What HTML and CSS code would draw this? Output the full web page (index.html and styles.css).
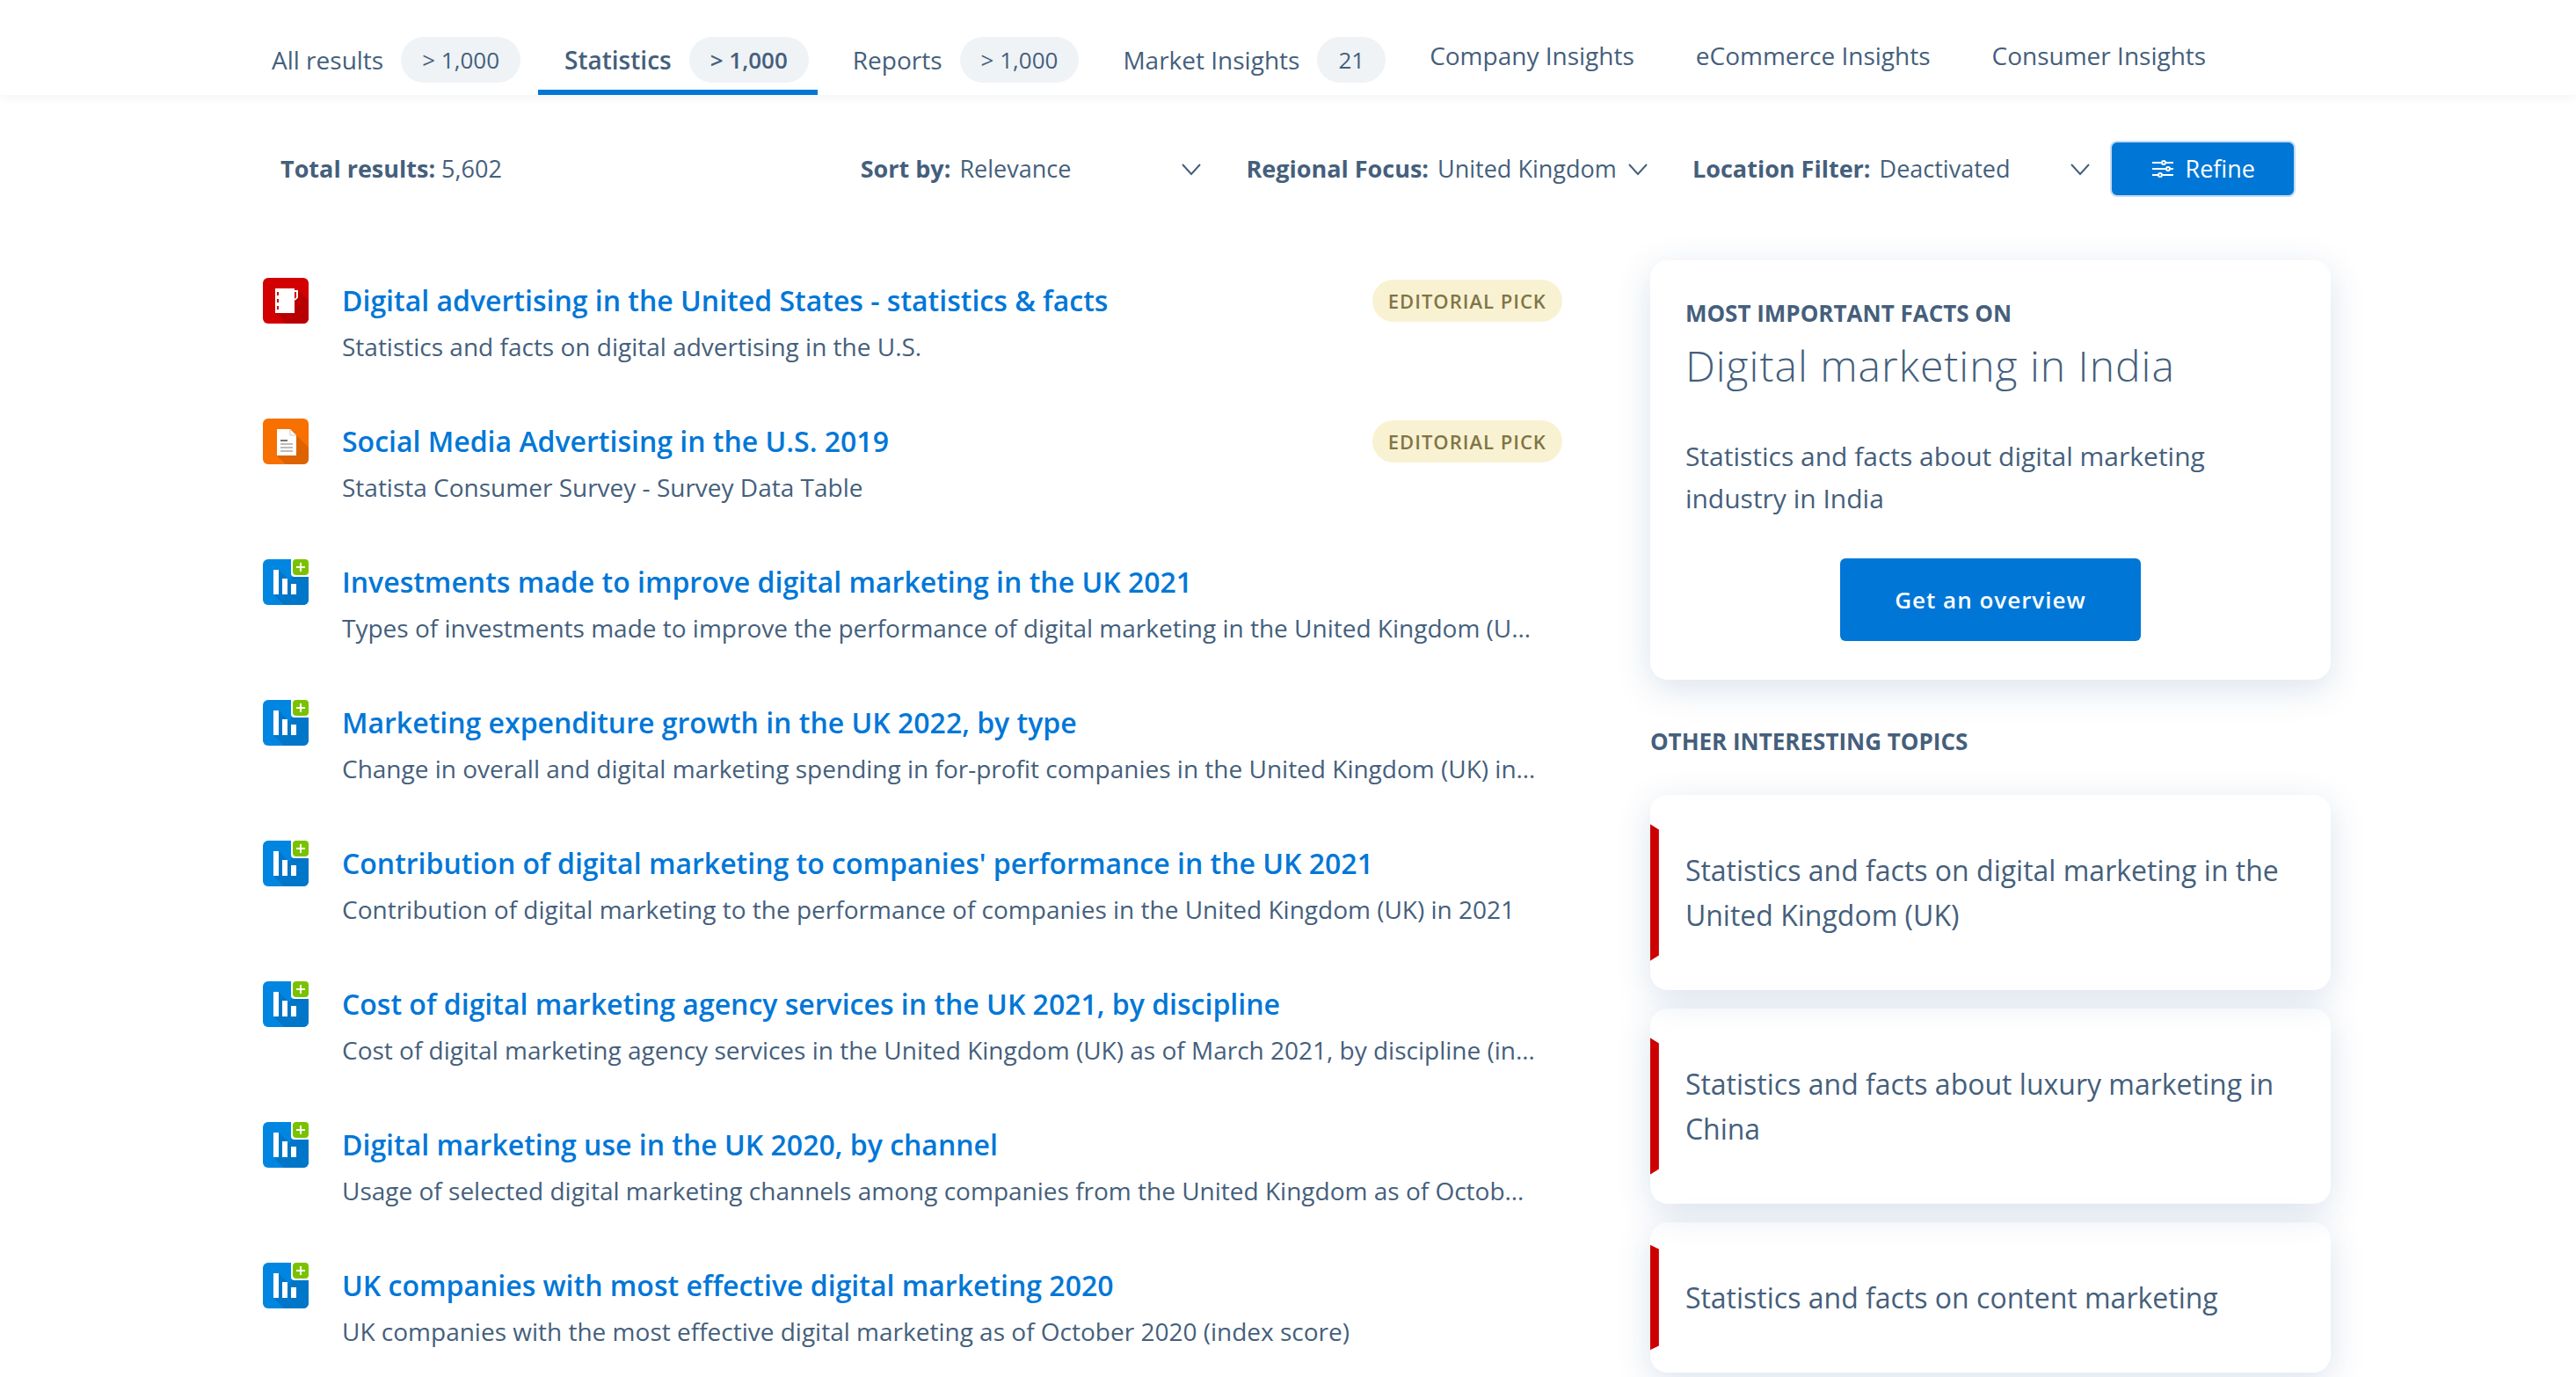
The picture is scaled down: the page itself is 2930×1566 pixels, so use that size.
FILE: index.html
```
<!DOCTYPE html>
<html lang="en">
<head>
    <meta charset="UTF-8">
    <meta name="viewport" content="width=device-width, initial-scale=1.0">
    <title>Search results</title>
    <link rel="stylesheet" href="styles.css">
</head>
<body>
    <!-- Icons shared by the result rows -->
    <svg class="sprite" aria-hidden="true">
        <symbol id="icon-topic" viewBox="0 0 52 52">
            <rect width="52" height="52" rx="6" fill="#d20000"/>
            <path d="M40 14l12 12v20a6 6 0 0 1-6 6H26L14 40z" fill="#b80000"/>
            <path d="M14 12h22v28H14z" fill="#fff"/>
            <path d="M16 16h2v4h-2zM16 24h2v4h-2zM16 32h2v4h-2z" fill="#d20000"/>
            <path d="M35 15h4v7l-3 3" fill="none" stroke="#fff" stroke-width="2"/>
            <path d="M36 16h2v6l-2 2z" fill="#d20000"/>
        </symbol>
        <symbol id="icon-survey" viewBox="0 0 52 52">
            <rect width="52" height="52" rx="6" fill="#f77000"/>
            <path d="M38 19l14 14v13a6 6 0 0 1-6 6H26L16 42z" fill="#dc6300"/>
            <path d="M16 12h15l7 7v23H16z" fill="#fff"/>
            <path d="M31 12v7h7" fill="none" stroke="#c8c8c8" stroke-width="1"/>
            <path d="M20 24h8v2h-8z" fill="#757575"/>
            <path d="M20 28h14v2H20zM20 32h14v2H20zM20 36h14v2H20z" fill="#bdbdbd"/>
        </symbol>
        <symbol id="icon-stat" viewBox="0 0 52 52">
            <rect width="52" height="52" rx="6" fill="#0086e0"/>
            <path d="M18 12l34 34a6 6 0 0 1-6 6H24L12 40z" fill="#0076c8"/>
            <path d="M34 18h18v28L30 24z" fill="#0076c8"/>
            <path d="M12 12h6v28h-6zM22 22h6v18h-6zM32 28h6v12h-6z" fill="#fff"/>
            <path d="M32 0h20v20H36a4 4 0 0 1-4-4z" fill="#fff"/>
            <rect x="34" width="18" height="18" rx="4" fill="#7ac200"/>
            <path d="M42 4h2v4h4v2h-4v4h-2v-4h-4V8h4z" fill="#fff"/>
        </symbol>
        <symbol id="icon-chevron" viewBox="0 0 24 14">
            <path d="M2 1l10 11L22 1" fill="none" stroke="currentColor" stroke-width="2"/>
        </symbol>
    </svg>

    <header class="tabs-bar">
        <nav class="tabs">
            <a class="tab has-count" href="#">All results <span class="count">&gt; 1,000</span></a>
            <a class="tab has-count active" href="#">Statistics <span class="count">&gt; 1,000</span></a>
            <a class="tab has-count" href="#">Reports <span class="count">&gt; 1,000</span></a>
            <a class="tab has-count" href="#">Market Insights <span class="count">21</span></a>
            <a class="tab" href="#">Company Insights</a>
            <a class="tab" href="#">eCommerce Insights</a>
            <a class="tab" href="#">Consumer Insights</a>
        </nav>
    </header>

    <div class="filters">
        <p class="total"><strong>Total results:</strong> 5,602</p>
        <div class="filter">
            <label for="sort">Sort by:</label>
            <div class="select select-wide">
                <select id="sort">
                    <option>Relevance</option>
                    <option>Date of publication</option>
                </select>
                <svg><use href="#icon-chevron"/></svg>
            </div>
        </div>
        <div class="filter">
            <label for="region">Regional Focus:</label>
            <div class="select">
                <select id="region">
                    <option>United Kingdom</option>
                    <option>Worldwide</option>
                </select>
                <svg><use href="#icon-chevron"/></svg>
            </div>
        </div>
        <div class="filter">
            <label for="location">Location Filter:</label>
            <div class="select">
                <select id="location">
                    <option>Deactivated</option>
                    <option>Activated</option>
                </select>
                <svg><use href="#icon-chevron"/></svg>
            </div>
        </div>
        <button class="refine" type="button">
            <svg viewBox="0 0 24 20" fill="none" stroke="currentColor" stroke-width="2">
                <path d="M0 3h10M16 3h8M0 10h15M21 10h3M0 17h6M12 17h12"/>
                <circle cx="13" cy="3" r="2"/>
                <circle cx="18" cy="10" r="2"/>
                <circle cx="9" cy="17" r="2"/>
            </svg>
            Refine
        </button>
    </div>

    <div class="content">
        <main class="results">
            <article class="result">
                <svg class="icon"><use href="#icon-topic"/></svg>
                <div class="text">
                    <h2><a href="#">Digital advertising in the United States - statistics &amp; facts</a></h2>
                    <p>Statistics and facts on digital advertising in the U.S.</p>
                </div>
                <span class="pick">Editorial Pick</span>
            </article>
            <article class="result">
                <svg class="icon"><use href="#icon-survey"/></svg>
                <div class="text">
                    <h2><a href="#">Social Media Advertising in the U.S. 2019</a></h2>
                    <p>Statista Consumer Survey - Survey Data Table</p>
                </div>
                <span class="pick">Editorial Pick</span>
            </article>
            <article class="result">
                <svg class="icon"><use href="#icon-stat"/></svg>
                <div class="text">
                    <h2><a href="#">Investments made to improve digital marketing in the UK 2021</a></h2>
                    <p>Types of investments made to improve the performance of digital marketing in the United Kingdom (U…</p>
                </div>
            </article>
            <article class="result">
                <svg class="icon"><use href="#icon-stat"/></svg>
                <div class="text">
                    <h2><a href="#">Marketing expenditure growth in the UK 2022, by type</a></h2>
                    <p>Change in overall and digital marketing spending in for-profit companies in the United Kingdom (UK) in…</p>
                </div>
            </article>
            <article class="result">
                <svg class="icon"><use href="#icon-stat"/></svg>
                <div class="text">
                    <h2><a href="#">Contribution of digital marketing to companies' performance in the UK 2021</a></h2>
                    <p>Contribution of digital marketing to the performance of companies in the United Kingdom (UK) in 2021</p>
                </div>
            </article>
            <article class="result">
                <svg class="icon"><use href="#icon-stat"/></svg>
                <div class="text">
                    <h2><a href="#">Cost of digital marketing agency services in the UK 2021, by discipline</a></h2>
                    <p>Cost of digital marketing agency services in the United Kingdom (UK) as of March 2021, by discipline (in…</p>
                </div>
            </article>
            <article class="result">
                <svg class="icon"><use href="#icon-stat"/></svg>
                <div class="text">
                    <h2><a href="#">Digital marketing use in the UK 2020, by channel</a></h2>
                    <p>Usage of selected digital marketing channels among companies from the United Kingdom as of Octob…</p>
                </div>
            </article>
            <article class="result">
                <svg class="icon"><use href="#icon-stat"/></svg>
                <div class="text">
                    <h2><a href="#">UK companies with most effective digital marketing 2020</a></h2>
                    <p>UK companies with the most effective digital marketing as of October 2020 (index score)</p>
                </div>
            </article>
        </main>

        <aside class="sidebar">
            <section class="card facts">
                <h3>Most important facts on</h3>
                <p class="facts-title">Digital marketing in India</p>
                <p class="facts-text">Statistics and facts about digital marketing industry in India</p>
                <button class="overview" type="button">Get an overview</button>
            </section>
            <h3 class="other-title">Other interesting topics</h3>
            <div class="topics">
                <a class="card topic" href="#">Statistics and facts on digital marketing in the United Kingdom (UK)</a>
                <a class="card topic" href="#">Statistics and facts about luxury marketing in China</a>
                <a class="card topic" href="#">Statistics and facts on content marketing</a>
            </div>
        </aside>
    </div>
</body>
</html>
```

FILE: styles.css
```
* {
    box-sizing: border-box;
}
body {
    margin: 0;
    font-family: "Open Sans", "Noto Sans", sans-serif;
    font-size: 28px;
    line-height: 52px;
    color: #455f7c;
    background-color: #fff;
    overflow-x: hidden;
}
h2, h3, p {
    margin: 0;
}
a {
    color: inherit;
    text-decoration: none;
}
.sprite {
    display: none;
}

/* Tabs */
.tabs-bar {
    padding: 42px 279px 0;
    box-shadow: 0 2px 12px rgba(15, 39, 65, 0.06);
}
.tabs {
    display: flex;
    gap: 10px;
}
.tab {
    display: flex;
    height: 66px;
    padding: 0 30px;
    line-height: 42px;
    border-bottom: 6px solid transparent;
    white-space: nowrap;
}
.tab.has-count {
    gap: 20px;
    padding-right: 10px;
    line-height: 52px;
}
.tab.active {
    font-weight: 600;
    border-color: #0077d7;
}
.count {
    height: 52px;
    padding: 0 24px;
    font-size: 26px;
    line-height: 52px;
    border-radius: 26px;
    background-color: #eff3f6;
}

/* Filters */
.filters {
    display: flex;
    align-items: center;
    padding: 52px 319px 0;
    font-size: 27px;
}
.total {
    flex: 1;
}
.filter {
    display: flex;
    gap: 10px;
    margin-right: 50px;
}
.filter:nth-of-type(3) {
    margin-right: 22px;
}
.filter label,
.total strong {
    font-weight: 700;
}
.select {
    position: relative;
    width: 240px;
}
.select-wide {
    width: 276px;
}
.select select {
    width: 100%;
    height: 52px;
    padding: 0;
    border: 0;
    appearance: none;
    background: none;
    font: inherit;
    color: inherit;
}
.select svg {
    position: absolute;
    top: 20px;
    right: 0;
    width: 24px;
    height: 14px;
    pointer-events: none;
}
.refine {
    display: flex;
    align-items: center;
    gap: 14px;
    height: 64px;
    padding: 0 44px 0 46px;
    border: 2px solid #c5dcf2;
    border-radius: 8px;
    background-color: #0077d7;
    font: inherit;
    color: #fff;
    cursor: pointer;
}
.refine svg {
    width: 24px;
    height: 20px;
}

/* Main area */
.content {
    display: grid;
    grid-template-columns: minmax(0, 21fr) minmax(0, 11fr);
    gap: 100px;
    align-items: start;
    padding: 72px 279px 40px 299px;
}
.results {
    display: grid;
    gap: 56px;
    padding-top: 20px;
}
.result {
    display: flex;
    align-items: flex-start;
}
.icon {
    flex: none;
    width: 52px;
    height: 52px;
    margin-right: 38px;
}
.text {
    flex: 1;
    min-width: 0;
}
.text h2 {
    font-size: 32px;
    font-weight: 600;
    line-height: 52px;
    color: #0077d7;
}
.text p {
    overflow: hidden;
    text-overflow: ellipsis;
    white-space: nowrap;
}
.text a:hover {
    text-decoration: underline;
}
.pick {
    margin-top: 2px;
    padding: 0 18px;
    font-size: 22px;
    font-weight: 600;
    line-height: 48px;
    letter-spacing: 1px;
    text-transform: uppercase;
    border-radius: 24px;
    color: #807546;
    background-color: #f9f2d2;
}

/* Sidebar */
.card {
    display: block;
    border-radius: 20px;
    box-shadow: 0 10px 40px rgba(15, 68, 135, 0.15);
}
h3 {
    font-size: 26px;
    font-weight: 700;
    line-height: 40px;
    text-transform: uppercase;
}
.facts {
    padding: 40px 40px 44px;
}
.facts-title {
    font-size: 48px;
    font-weight: 300;
    line-height: 80px;
    letter-spacing: 1px;
    margin-bottom: 39px;
}
.facts-text {
    font-size: 30px;
    line-height: 48px;
}
.overview {
    display: block;
    height: 94px;
    margin: 44px auto 0;
    padding: 0 62px;
    border: 0;
    border-radius: 6px;
    background-color: #0077d7;
    font: inherit;
    font-size: 26px;
    font-weight: 600;
    letter-spacing: 1px;
    color: #fff;
    cursor: pointer;
}
.other-title {
    margin: 50px 0 41px;
}
.topics {
    display: grid;
    gap: 21px;
}
.topic {
    position: relative;
    padding: 60px 40px;
    font-size: 32px;
    line-height: 51px;
}
.topic::before {
    content: "";
    position: absolute;
    top: 15%;
    left: 0;
    width: 10px;
    height: 70%;
    background-color: #cc0000;
    clip-path: polygon(0 0, 100% 4%, 100% 96%, 0 100%);
}

@media (max-width: 2600px) {
    .tabs-bar {
        padding-left: 20px;
        padding-right: 20px;
    }
    .tabs,
    .filters {
        flex-wrap: wrap;
    }
    .filters,
    .content {
        padding-left: 60px;
        padding-right: 60px;
    }
}

@media (max-width: 1600px) {
    .content {
        grid-template-columns: minmax(0, 1fr);
    }
}
```
